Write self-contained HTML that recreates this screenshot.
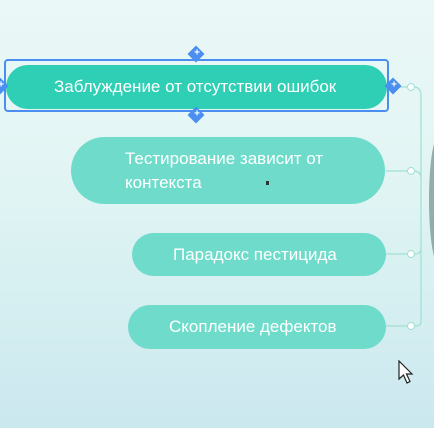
<!DOCTYPE html>
<html><head><meta charset="utf-8"><style>
html,body{margin:0;padding:0}
body{width:434px;height:428px;overflow:hidden;position:relative;font-family:"Liberation Sans","DejaVu Sans",sans-serif;
background:linear-gradient(180deg,#eaf8f7 0%,#e2f5f4 40%,#d6eff1 70%,#cbe8ef 100%);}
.node{position:absolute;color:#fff;font-size:17px;display:flex;align-items:center;box-sizing:border-box;border-radius:24px;background:#6fdccb;white-space:nowrap}
.sel{position:absolute;left:4px;top:59px;width:385px;height:53px;border:2px solid #4a8ef0;border-radius:4px;box-sizing:border-box}
.h{position:absolute;width:12px;height:12px;background:#4a8ef0;transform:rotate(45deg)}
.h:after{content:"+";position:absolute;transform:rotate(-45deg);color:#fff;font-size:10px;font-weight:bold;left:3px;top:-1px}
</style></head><body>
<div style="position:absolute;left:429px;top:135px;width:20px;height:130px;border-radius:50%;background:#7f9a9a;opacity:.8"></div>
<svg width="434" height="428" style="position:absolute;left:0;top:0">
<g stroke="#9fe0d4" stroke-width="1.2" fill="none">
<path d="M388 87H407M415 87Q421 88 421 96V322Q421 326 415 326"/>
<path d="M386 171H407M415 171Q421 172 421 178"/>
<path d="M386 254H407M415 254Q421 254 421 248"/>
<path d="M386 326H407"/>
</g>
<g fill="#fff" stroke="#9fe0d4" stroke-width="1">
<circle cx="411" cy="87" r="3.5"/><circle cx="411" cy="171" r="3.5"/><circle cx="411" cy="254" r="3.5"/><circle cx="411" cy="326" r="3.5"/>
</g>
</svg>
<div class="node" style="left:6px;top:65px;width:381px;height:44px;background:#2ecfb5;padding-left:48px">Заблуждение от отсутствии ошибок</div>
<div class="sel"></div>
<div class="h" style="left:190px;top:48px"></div>
<div class="h" style="left:190px;top:109px"></div>
<div class="h" style="left:387px;top:80px"></div>
<div class="h" style="left:-6px;top:80px"></div>
<div class="node" style="left:71px;top:137px;width:314px;height:67px;border-radius:34px;padding-left:54px;line-height:24px">Тестирование зависит от<br>контекста</div>
<div class="node" style="left:132px;top:233px;width:254px;height:43px;padding-left:41px">Парадокс пестицида</div>
<div class="node" style="left:128px;top:305px;width:258px;height:44px;padding-left:41px">Скопление дефектов</div>
<svg width="20" height="26" style="position:absolute;left:398px;top:360px"><path d="M1 1V19L5.5 15L9 23L12 21.5L8.5 14H14Z" fill="#fff" stroke="#222" stroke-width="1.2"/></svg>
<div style="position:absolute;left:266px;top:181px;width:3px;height:4px;background:#333"></div>
</body></html>
